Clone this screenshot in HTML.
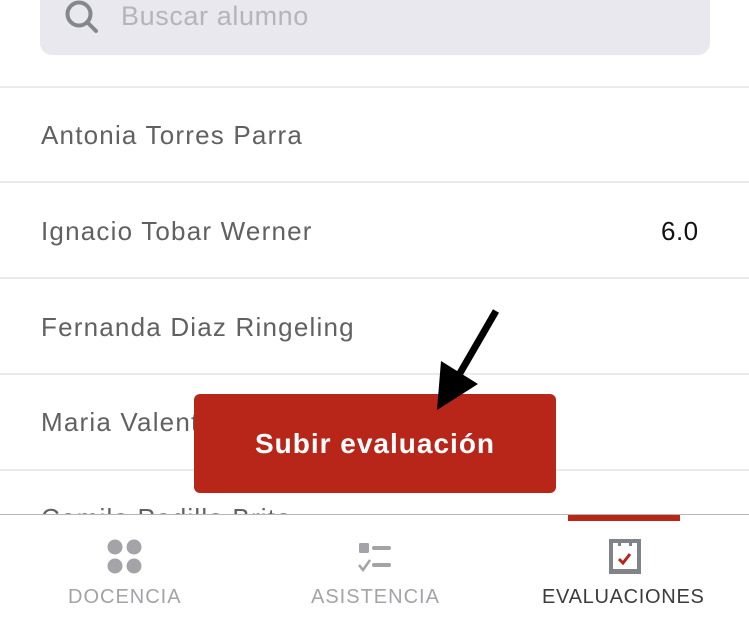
<!DOCTYPE html>
<html><head><meta charset="utf-8"><style>
*{margin:0;padding:0;box-sizing:border-box}
body{width:749px;height:634px;overflow:hidden;background:#fff;font-family:"Liberation Sans",sans-serif;position:relative}
.search{position:absolute;left:40px;top:-20px;width:670px;height:75px;background:#e9e8ee;border-radius:12px}
.st{position:absolute;left:121px;top:1px;font-size:27px;color:#b4b4ba;line-height:30px;letter-spacing:0.6px}
.sep{position:absolute;left:0;width:749px;height:2px;background:#ebebef}
.name{position:absolute;left:41px;font-size:26px;color:#616161;line-height:30px;letter-spacing:1.2px}
.btn{position:absolute;left:194px;top:394px;width:362px;height:99px;background:#b8261a;border-radius:6px;color:#fff;font-weight:bold;font-size:28px;text-align:center;line-height:99px;letter-spacing:1px}
.tab{position:absolute;left:0;top:514px;width:749px;height:120px;background:#fff;border-top:1px solid #b5b5b5}
.lbl{position:absolute;top:71px;font-size:20px;color:#a3a3a8;letter-spacing:1px}
</style></head><body>
<div class="search"></div>
<svg style="position:absolute;left:64px;top:0" width="36" height="34"><circle cx="15" cy="14" r="11.5" fill="none" stroke="#84878c" stroke-width="4"/><line x1="23" y1="22" x2="32" y2="31" stroke="#84878c" stroke-width="4" stroke-linecap="round"/></svg>
<div class="st">Buscar alumno</div>
<div class="sep" style="top:86px"></div>
<div class="name" style="top:120px">Antonia Torres Parra</div>
<div class="sep" style="top:181px"></div>
<div class="name" style="top:216px">Ignacio Tobar Werner</div>
<div class="name" style="top:216px;left:661px;color:#111;letter-spacing:0.5px">6.0</div>
<div class="sep" style="top:277px"></div>
<div class="name" style="top:312px">Fernanda Diaz Ringeling</div>
<div class="sep" style="top:373px"></div>
<div class="name" style="top:407px">Maria Valentina Soto</div>
<div class="sep" style="top:469px"></div>
<div class="name" style="top:503px">Camilo Padilla Brito</div>
<div class="btn">Subir evaluación</div>
<svg style="position:absolute;left:0;top:0" width="749" height="634"><line x1="496" y1="311" x2="456" y2="380" stroke="#000" stroke-width="7"/><polygon points="441,361 478,384 437,410" fill="#000"/></svg>
<div class="tab">
<div style="position:absolute;left:568px;top:0;width:112px;height:6px;background:#b8261a"></div>
<svg style="position:absolute;left:107px;top:24px" width="36" height="36"><circle cx="8" cy="8" r="7.5" fill="#a3a3a8"/><circle cx="27" cy="8" r="7.5" fill="#a3a3a8"/><circle cx="8" cy="27" r="7.5" fill="#a3a3a8"/><circle cx="27" cy="27" r="7.5" fill="#a3a3a8"/></svg>
<div class="lbl" style="left:68px">DOCENCIA</div>
<svg style="position:absolute;left:358px;top:26px" width="36" height="34"><rect x="1" y="2" width="10" height="10" rx="1.5" fill="#a3a3a8"/><rect x="14" y="5" width="19" height="4" rx="2" fill="#a3a3a8"/><polyline points="1,24 5,29 12,19" fill="none" stroke="#a3a3a8" stroke-width="2.5"/><rect x="14" y="22" width="19" height="4" rx="2" fill="#a3a3a8"/></svg>
<div class="lbl" style="left:311px">ASISTENCIA</div>
<svg style="position:absolute;left:609px;top:23px" width="33" height="36"><path d="M0 1h32v35h-32z M4 5v26h24v-26h-5v3h-3v-3h-8v3h-3v-3z" fill="#808389" fill-rule="evenodd"/><polyline points="10,21 14,25 21,16" fill="none" stroke="#b8261a" stroke-width="3"/></svg>
<div class="lbl" style="left:542px;color:#3c3c3e;letter-spacing:0.7px">EVALUACIONES</div>
</div>
</body></html>
